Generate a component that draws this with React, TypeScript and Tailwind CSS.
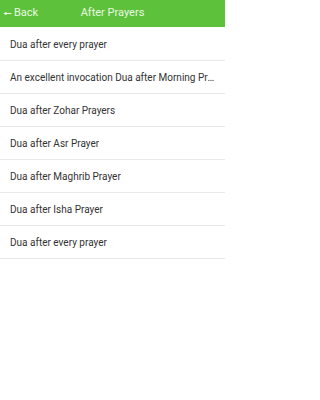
const items = [
  'Dua after every prayer',
  'An excellent invocation Dua after Morning Prayer',
  'Dua after Zohar Prayers',
  'Dua after Asr Prayer',
  'Dua after Maghrib Prayer',
  'Dua after Isha Prayer',
  'Dua after every prayer',
];

export default function App() {
  return (
    <div className="w-[225px] h-[400px] bg-white font-['Roboto',sans-serif] overflow-hidden">
      <div className="relative h-[27px] bg-[#5ec13c] flex items-center justify-center">
        <div className="absolute left-[3px] top-0 h-full flex items-center text-[11px] text-[#e8f8e0]">
          <span className="text-[10px] mr-[2px]">&#129044;</span>Back
        </div>
        <span className="text-[11px] text-[#e8f8e0]">After Prayers</span>
      </div>
      <ul className="pt-[1px]">
        {items.map((t, i) => (
          <li
            key={i}
            className="h-[33px] flex items-center px-[10px] border-b border-[#e8e8e8] text-[10px] text-[#333]"
          >
            <span className="truncate">{t}</span>
          </li>
        ))}
      </ul>
    </div>
  );
}
